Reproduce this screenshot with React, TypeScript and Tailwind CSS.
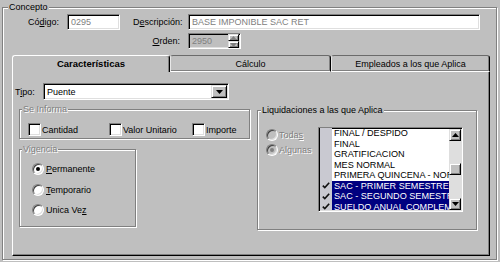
import React from "react";

const sunken =
  "border border-t-[#808080] border-l-[#808080] border-r-white border-b-white shadow-[inset_1px_1px_0_#000,inset_-1px_-1px_0_#dfdfdf]";
const raised =
  "border border-t-[#dfdfdf] border-l-[#dfdfdf] border-r-black border-b-black shadow-[inset_1px_1px_0_#fff,inset_-1px_-1px_0_#808080]";
const etched = "border border-[#808080] shadow-[inset_1px_1px_0_#fff,1px_1px_0_#fff]";
const disabledText = "text-[#808080] [text-shadow:1px_1px_0_#fff]";

function U({ children }: { children: React.ReactNode }) {
  return <span className="underline underline-offset-[1px]">{children}</span>;
}

function Arrow({ up, color = "#000" }: { up?: boolean; color?: string }) {
  return (
    <svg width="7" height="4" viewBox="0 0 7 4">
      <path d={up ? "M3.5 0 L7 4 L0 4 Z" : "M0 0 L7 0 L3.5 4 Z"} fill={color} />
    </svg>
  );
}

function Check() {
  return (
    <svg width="8" height="7" viewBox="0 0 8 7">
      <path d="M0.8 3.6 L2.8 5.6 L7.2 0.8" fill="none" stroke="#111" strokeWidth="1.6" />
    </svg>
  );
}

function Radio({ checked, disabled }: { checked?: boolean; disabled?: boolean }) {
  return (
    <span
      className={`w-[12px] h-[12px] shrink-0 rounded-full flex items-center justify-center border border-t-[#808080] border-l-[#808080] border-r-white border-b-white shadow-[inset_1px_1px_0_#404040,inset_-1px_-1px_0_#dfdfdf] ${
        disabled ? "bg-[#bfbfbf]" : "bg-white"
      }`}
    >
      {checked && <span className={`w-[4px] h-[4px] rounded-full ${disabled ? "bg-[#808080]" : "bg-black"}`} />}
    </span>
  );
}

function CheckBox() {
  return <span className={`w-[13px] h-[13px] shrink-0 bg-white ${sunken}`} />;
}

const liquidaciones = [
  { label: "FINAL / DESPIDO", on: false },
  { label: "FINAL", on: false },
  { label: "GRATIFICACION", on: false },
  { label: "MES NORMAL", on: false },
  { label: "PRIMERA QUINCENA - NORMAL", on: false },
  { label: "SAC - PRIMER SEMESTRE", on: true },
  { label: "SAC - SEGUNDO SEMESTRE", on: true },
  { label: "SUELDO ANUAL COMPLEMENTARIO", on: true },
];

export default function App() {
  return (
    <div className="w-[500px] h-[262px] overflow-hidden bg-[#bfbfbf] pt-[2px] pl-[2px] font-['Liberation_Sans',Arial,sans-serif] text-[9px] leading-[10px] text-black">
      {/* Concepto */}
      <fieldset className={`w-[495px] h-[258px] ${etched}`}>
        <legend className="ml-[5px] px-px bg-[#bfbfbf] leading-[10px]">Concepto</legend>

        <div className="flex items-center mt-[2px] h-[16px]">
          <span className="w-[57px] text-right pr-px">
            Có<U>d</U>igo:
          </span>
          <div className={`ml-[7px] w-[53px] h-[16px] bg-white ${sunken} flex items-center pl-[3px] text-[#808080]`}>
            0295
          </div>
          <span className="ml-[13px] w-[55px]">
            D<U>e</U>scripción:
          </span>
          <div className={`w-[292px] h-[16px] bg-white ${sunken} flex items-center pl-[3px] text-[#808080]`}>
            BASE IMPONIBLE SAC RET
          </div>
        </div>

        <div className="flex items-center mt-[3px] h-[16px]">
          <span className="w-[185px] text-right pr-[8px]">
            <U>O</U>rden:
          </span>
          <div className={`w-[53px] h-[16px] bg-[#bfbfbf] ${sunken} flex items-center p-px`}>
            <span className="flex-1 pl-[2px] text-[#808080]">2950</span>
            <div className="w-[11px] h-[14px] flex flex-col">
              <span className={`h-[7px] ${raised} bg-[#bfbfbf] flex items-center justify-center`}>
                <Arrow up color="#808080" />
              </span>
              <span className={`h-[7px] ${raised} bg-[#bfbfbf] flex items-center justify-center`}>
                <Arrow color="#808080" />
              </span>
            </div>
          </div>
        </div>

        {/* Tabs */}
        <div className="flex ml-[9px] mt-[6px] h-[17px]">
          <div className="w-[158px] h-[17px] rounded-t-[3px] border-t border-l border-r border-t-white border-l-white border-r-black shadow-[inset_-1px_0_0_#808080] flex items-center justify-center font-bold text-[9.5px]">
            Características
          </div>
          <div className="w-[161px] h-[17px] rounded-t-[3px] border border-t-[#6b6b6b] border-l-[#e8e8e8] border-r-black border-b-white shadow-[inset_-1px_-1px_0_#808080] flex items-center justify-center">
            Cálculo
          </div>
          <div className="w-[159px] h-[17px] rounded-t-[3px] border border-t-[#6b6b6b] border-l-[#e8e8e8] border-r-black border-b-white shadow-[inset_-1px_-1px_0_#808080] flex items-center justify-center">
            Empleados a los que Aplica
          </div>
        </div>

        <div className="ml-[9px] w-[478px] h-[184px] border-l border-r border-b border-l-white border-r-black border-b-black shadow-[inset_-1px_-1px_0_#808080]">
          <div className="flex items-center pl-[2px] pt-[11px]">
            <span className="w-[28px]">
              T<U>i</U>po:
            </span>
            <div className={`w-[186px] h-[17px] bg-white ${sunken} flex items-center p-px`}>
              <span className="flex-1 pl-[2px]">Puente</span>
              <span className={`w-[16px] h-[13px] bg-[#bfbfbf] ${raised} flex items-center justify-center`}>
                <Arrow />
              </span>
            </div>
          </div>

          <div className="flex pl-[6px] mt-[4px]">
            <div className="w-[231px] flex flex-col">
              <fieldset className={`w-[231px] h-[35px] ${etched}`}>
                <legend className={`ml-[2px] px-px bg-[#bfbfbf] ${disabledText}`}>Se Informa</legend>
                <div className="flex items-center pl-[8px] pt-[9px]">
                  <div className="w-[81px] flex items-center gap-px">
                    <CheckBox />
                    <span>Cantidad</span>
                  </div>
                  <div className="w-[83px] flex items-center gap-px">
                    <CheckBox />
                    <span>Valor Unitario</span>
                  </div>
                  <div className="flex items-center gap-px">
                    <CheckBox />
                    <span>Importe</span>
                  </div>
                </div>
              </fieldset>

              <fieldset className={`mt-[5px] w-[117px] h-[83px] ${etched}`}>
                <legend className={`ml-[2px] px-px bg-[#bfbfbf] ${disabledText}`}>Vigencia</legend>
                <div className="flex flex-col pl-[12px] pt-[5px]">
                  <div className="h-[20.5px] flex items-center gap-[2px]">
                    <Radio checked />
                    <span>
                      <U>P</U>ermanente
                    </span>
                  </div>
                  <div className="h-[20.5px] flex items-center gap-[2px]">
                    <Radio />
                    <span>
                      <U>T</U>emporario
                    </span>
                  </div>
                  <div className="h-[20.5px] flex items-center gap-[2px]">
                    <Radio />
                    <span>
                      Unica Ve<U>z</U>
                    </span>
                  </div>
                </div>
              </fieldset>
            </div>

            <fieldset className={`ml-[7px] mt-px w-[220px] h-[125px] ${etched}`}>
              <legend className="ml-[3px] px-px bg-[#bfbfbf]">Liquidaciones a las que Aplica</legend>
              <div className="flex items-start pt-[12px]">
                <div className="w-[60px] flex flex-col pl-[8px]">
                  <div className="h-[15px] flex items-center gap-px">
                    <Radio disabled />
                    <span className={disabledText}>
                      Toda<U>s</U>
                    </span>
                  </div>
                  <div className="h-[15px] flex items-center gap-px">
                    <Radio disabled checked />
                    <span className={disabledText}>Algunas</span>
                  </div>
                </div>

                <div className={`w-[145px] h-[85px] bg-white ${sunken} p-px flex`}>
                  <div className="flex-1 overflow-hidden flex flex-col -mt-px text-[9.1px]">
                    {liquidaciones.map((l) => (
                      <div key={l.label} className="h-[10.5px] shrink-0 flex">
                        <span className="w-[12px] shrink-0 bg-[#c9c9d1] flex items-center justify-center">
                          {l.on && <Check />}
                        </span>
                        <span
                          className={`flex-1 overflow-hidden whitespace-nowrap pl-[2px] leading-[10.5px] ${
                            l.on ? "bg-[#000080] text-white" : "text-black"
                          }`}
                        >
                          {l.label}
                        </span>
                      </div>
                    ))}
                  </div>
                  <div className="w-[12px] flex flex-col">
                    <span className={`h-[12px] bg-[#bfbfbf] ${raised} flex items-center justify-center`}>
                      <Arrow up />
                    </span>
                    <div className="flex-1 bg-[#dedede]">
                      <div className={`mt-[22px] h-[12px] bg-[#bfbfbf] ${raised}`} />
                    </div>
                    <span className={`h-[12px] bg-[#bfbfbf] ${raised} flex items-center justify-center`}>
                      <Arrow />
                    </span>
                  </div>
                </div>
              </div>
            </fieldset>
          </div>
        </div>
      </fieldset>
    </div>
  );
}
